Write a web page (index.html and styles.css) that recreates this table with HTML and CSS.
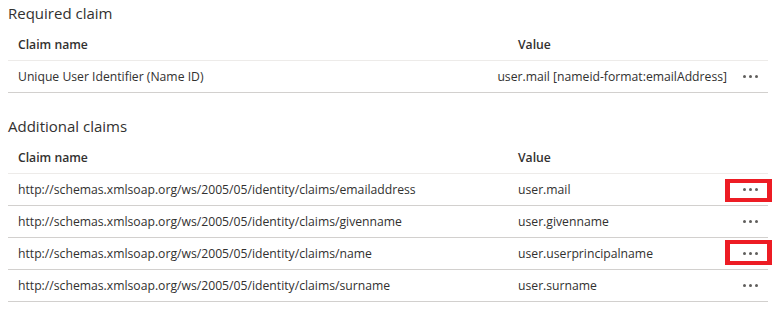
FILE: index.html
```html
<!DOCTYPE html>
<html lang="en">
<head>
  <meta charset="UTF-8" />
  <title>Attributes &amp; Claims</title>
  <link rel="stylesheet" href="styles.css">
</head>
<body>

  <section class="claims">
    <h2>Required claim</h2>
    <div class="claim-table">
      <div class="row head">
        <div class="cell">Claim name</div>
        <div class="cell">Value</div>
        <div class="cell"></div>
      </div>
      <div class="row">
        <div class="cell">Unique User Identifier (Name ID)</div>
        <div class="cell value-right">user.mail [nameid-format:emailAddress]</div>
        <div class="cell more"><span class="dots"><i></i><i></i><i></i></span></div>
      </div>
    </div>
  </section>

  <section class="claims spaced">
    <h2>Additional claims</h2>
    <div class="claim-table">
      <div class="row head">
        <div class="cell">Claim name</div>
        <div class="cell">Value</div>
        <div class="cell"></div>
      </div>
      <div class="row">
        <div class="cell">http://schemas.xmlsoap.org/ws/2005/05/identity/claims/emailaddress</div>
        <div class="cell">user.mail</div>
        <div class="cell more"><span class="dots"><i></i><i></i><i></i></span><span class="highlight"></span></div>
      </div>
      <div class="row">
        <div class="cell">http://schemas.xmlsoap.org/ws/2005/05/identity/claims/givenname</div>
        <div class="cell">user.givenname</div>
        <div class="cell more"><span class="dots"><i></i><i></i><i></i></span></div>
      </div>
      <div class="row">
        <div class="cell">http://schemas.xmlsoap.org/ws/2005/05/identity/claims/name</div>
        <div class="cell">user.userprincipalname</div>
        <div class="cell more"><span class="dots"><i></i><i></i><i></i></span><span class="highlight tall"></span></div>
      </div>
      <div class="row">
        <div class="cell">http://schemas.xmlsoap.org/ws/2005/05/identity/claims/surname</div>
        <div class="cell">user.surname</div>
        <div class="cell more"><span class="dots"><i></i><i></i><i></i></span></div>
      </div>
    </div>
  </section>

</body>
</html>
```

FILE: styles.css
```css
* {
  box-sizing: border-box;
  margin: 0;
  padding: 0;
}

body {
  font-family: "Open Sans", "Noto Sans", sans-serif;
  font-size: 12.2px;
  color: #323130;
  background: #fff;
  padding: 0 10px 0 8px;
}

.claims h2 {
  font-size: 15px;
  font-weight: 400;
  line-height: 22px;
  padding: 2px 0 4px;
  color: #323130;
}

.claims.spaced {
  margin-top: 20px;
}

.claim-table {
  width: 760px;
}

.row {
  display: grid;
  grid-template-columns: 500px 224px 36px;
  height: 32px;
  border-bottom: 1px solid #d2d0ce;
  align-items: center;
}

.row.head {
  height: 33px;
  font-weight: 600;
  border-bottom-color: #edebe9;
}

.cell {
  padding-left: 10px;
  white-space: nowrap;
}

.value-right {
  justify-self: end;
  padding-right: 5px;
}

.more {
  position: relative;
  height: 100%;
  padding: 0;
  display: flex;
  align-items: center;
  justify-content: center;
}

.dots {
  display: flex;
  gap: 3px;
}

.dots i {
  width: 3px;
  height: 3px;
  border-radius: 50%;
  background: #605e5c;
}

/* red annotation boxes drawn over the menu buttons */
.highlight {
  position: absolute;
  left: -7px;
  top: 5px;
  width: 47px;
  height: 23px;
  border: 4px solid #ed1c24;
  border-left-width: 5px;
  border-right-width: 5px;
}

.highlight.tall {
  top: 2px;
  height: 25px;
}
```
